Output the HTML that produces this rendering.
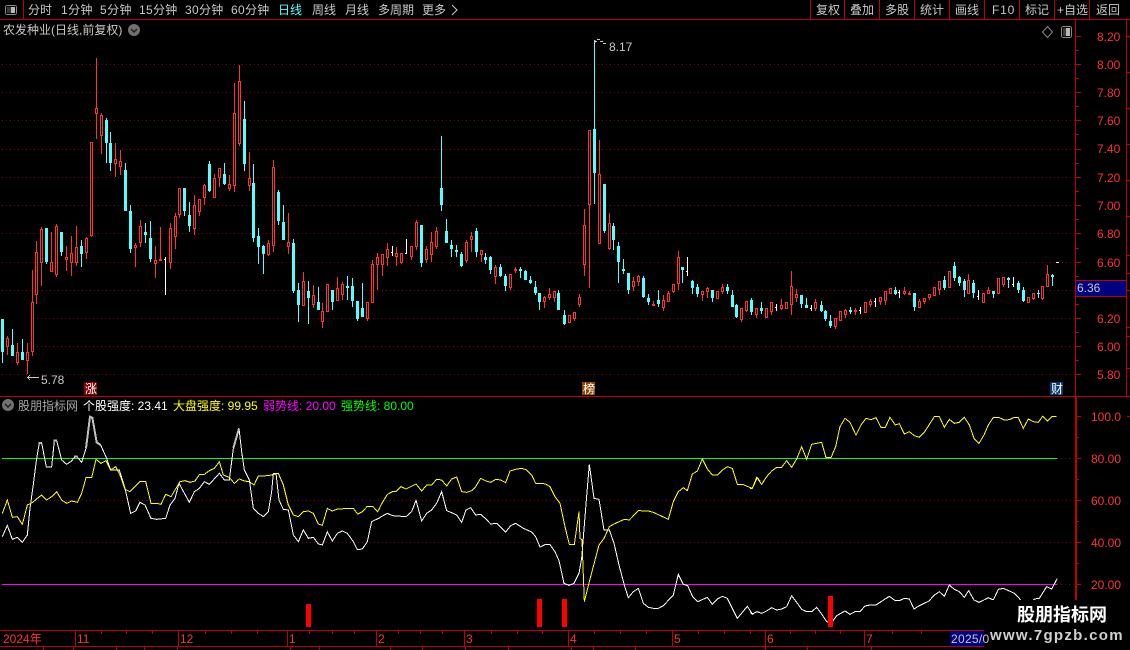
<!DOCTYPE html>
<html><head><meta charset="utf-8"><style>
html,body{margin:0;padding:0;background:#000;width:1130px;height:650px;overflow:hidden}
svg{display:block;position:absolute;left:0;top:0}
text{font-family:"Liberation Sans","WenQuanYi Zen Hei","Noto Sans CJK SC",sans-serif;font-size:12px;white-space:pre}
.t text{fill:#c8c8c8}
.a text{fill:#ff3232}
</style></head><body>
<svg width="1130" height="650" viewBox="0 0 1130 650" xmlns="http://www.w3.org/2000/svg">
<rect width="1130" height="650" fill="#000"/>
<g shape-rendering="crispEdges">
<!-- grid -->
<g stroke="#8a0000" stroke-dasharray="1 3" fill="none">
<path d="M2 64.5H1075M2 92.5H1075M2 120.5H1075M2 149.5H1075M2 177.5H1075M2 205.5H1075M2 233.5H1075M2 262.5H1075M2 290.5H1075M37 318.5H1075M37 346.5H1075M2 374.5H1075M2 500.5H1075M2 542.5H1075M1057 458.5H1075M1057 584.5H1075"/>
</g>
<!-- frame -->
<g fill="#c00000">
<rect x="0" y="19" width="1130" height="1"/>
<rect x="23" y="0" width="1" height="19"/>
<rect x="810" y="0" width="1" height="19"/><rect x="844" y="0" width="1" height="19"/><rect x="879" y="0" width="1" height="19"/><rect x="914" y="0" width="1" height="19"/><rect x="949" y="0" width="1" height="19"/><rect x="984" y="0" width="1" height="19"/><rect x="1019" y="0" width="1" height="19"/><rect x="1054" y="0" width="1" height="19"/><rect x="1089" y="0" width="1" height="19"/>
<rect x="0" y="396" width="1130" height="1"/>
<rect x="1075" y="20" width="1" height="376"/>
<rect x="1075" y="397" width="2" height="233"/>
<rect x="1126" y="20" width="1" height="376"/>
<rect x="0" y="630" width="1130" height="1"/>
<rect x="0" y="646" width="1130" height="1"/>
<rect x="75" y="630" width="1" height="16"/><rect x="178" y="630" width="1" height="16"/><rect x="287" y="630" width="1" height="16"/><rect x="376" y="630" width="1" height="16"/><rect x="464" y="630" width="1" height="16"/><rect x="568" y="630" width="1" height="16"/><rect x="672" y="630" width="1" height="16"/><rect x="765" y="630" width="1" height="16"/><rect x="864" y="630" width="1" height="16"/>
</g>
<path stroke="#c00000" fill="none" d="M1076 36.5H1081M1076 50.5H1079M1076 64.5H1081M1076 78.5H1079M1076 92.5H1081M1076 106.5H1079M1076 120.5H1081M1076 134.5H1079M1076 149.5H1081M1076 163.5H1079M1076 177.5H1081M1076 191.5H1079M1076 205.5H1081M1076 219.5H1079M1076 233.5H1081M1076 248.5H1079M1076 262.5H1081M1076 276.5H1079M1076 304.5H1079M1076 318.5H1081M1076 332.5H1079M1076 346.5H1081M1076 360.5H1079M1076 374.5H1081M1077 416.5H1081M1077 437.5H1079M1077 458.5H1081M1077 479.5H1079M1077 500.5H1081M1077 521.5H1079M1077 542.5H1081M1077 563.5H1079M1077 584.5H1081M1127 36.5H1130M1127 72.5H1130M1127 108.5H1130M1127 144.5H1130M1127 180.5H1130M1127 216.5H1130M1127 255.5H1130M1127 273.5H1130M1127 290.5H1130M1127 327.5H1130M1127 336.5H1130M1127 368.5H1130M1127 416.5H1130M101.5 631V634M126.5 631V634M152.5 631V634M205.5 631V634M231.5 631V634M257.5 631V634M309.5 631V634M332.5 631V634M354.5 631V634M398.5 631V634M420.5 631V634M442.5 631V634M491.5 631V634M517.5 631V634M542.5 631V634M594.5 631V634M620.5 631V634M646.5 631V634M698.5 631V634M724.5 631V634M750.5 631V634M790.5 631V634M815.5 631V634M840.5 631V634M892.5 631V634M921.5 631V634M43.5 647V650M73.5 647V650M116.5 647V650M144.5 647V650M177.5 647V650M290.5 647V650M319.5 647V650M390.5 647V650M422.5 647V650M465.5 647V650M508.5 647V650M571.5 647V650M593.5 647V650M635.5 647V650M765.5 647V650M807.5 647V650M871.5 647V650"/>
<!-- red wicks -->
<path fill="none" stroke="#ff3232" d="M7.5 336V355M17.5 343V365M27.5 343V374M32.5 270V356M36.5 241V304M41.5 227V286M51.5 232V272M56.5 224V277M66.5 246V271M71.5 236V276M76.5 226V266M86.5 237V259M91.5 142V237M96.5 58V139M101.5 113V154M115.5 143V177M120.5 150V175M135.5 243V267M140.5 220V247M155.5 246V278M160.5 227V261M170.5 223V269M175.5 213V249M179.5 188V218M194.5 195V235M199.5 199V216M204.5 184V205M214.5 174V198M219.5 168V187M229.5 175V191M234.5 83V192M239.5 65V146M249.5 152V191M268.5 240V256M273.5 160V252M288.5 213V254M303.5 272V306M313.5 285V308M322.5 303V328M327.5 284V312M337.5 277V301M342.5 282V300M367.5 302V321M372.5 260V303M377.5 253V290M382.5 254V276M387.5 243V266M396.5 247V266M401.5 253V264M411.5 246V260M416.5 220V250M426.5 246V263M431.5 232V262M436.5 227V249M466.5 240V263M471.5 232V252M481.5 250V262M495.5 265V284M510.5 274V290M515.5 267V273M544.5 296V308M549.5 288V300M554.5 291V302M569.5 315V323M574.5 312V321M579.5 294V307M584.5 209V276M589.5 130V288M599.5 140V244M609.5 213V250M633.5 277V291M638.5 275V286M653.5 301V306M663.5 295V311M668.5 291V302M673.5 284V293M678.5 251V290M702.5 291V301M707.5 287V298M717.5 291V299M722.5 284V294M741.5 308V322M746.5 301V312M756.5 308V318M766.5 308V318M771.5 302V315M781.5 299V310M786.5 302V309M791.5 271V315M796.5 289V302M815.5 299V311M835.5 318V329M840.5 311V321M845.5 309V318M855.5 308V315M865.5 302V313M870.5 299V307M880.5 297V305M885.5 291V305M890.5 288V294M904.5 287V295M909.5 291V295M919.5 299V308M924.5 298V304M929.5 294V300M934.5 287V296M939.5 281V295M949.5 271V288M968.5 274V294M983.5 293V303M988.5 287V294M998.5 278V294M1003.5 277V287M1028.5 297V303M1033.5 293V300M1042.5 286V300M1047.5 265V287"/>
<!-- red bodies -->
<path fill="none" stroke="#ff3232" stroke-width="3" d="M7.5 338V347M17.5 352V363M27.5 352V361M32.5 302V352M36.5 252V295M41.5 229V263M51.5 262V272M56.5 226V275M66.5 257V260M71.5 253V263M76.5 247V263M86.5 238V253M91.5 142V236M96.5 108V114M101.5 115V136M115.5 159V164M120.5 161V167M135.5 245V248M140.5 226V243M155.5 260V264M160.5 259V261M170.5 228V263M175.5 216V237M179.5 188V215M194.5 205V229M199.5 199V212M204.5 185V198M214.5 178V198M219.5 168V178M229.5 184V189M234.5 113V186M239.5 81V144M249.5 178V186M268.5 243V255M273.5 167V246M288.5 242V247M303.5 281V306M313.5 295V305M322.5 311V322M327.5 284V312M337.5 288V301M342.5 284V295M367.5 302V319M372.5 264V303M377.5 257V265M382.5 254V265M387.5 249V258M396.5 253V257M401.5 253V263M411.5 246V257M416.5 222V247M426.5 249V260M431.5 242V255M436.5 231V247M466.5 242V261M471.5 236V240M481.5 250V255M495.5 267V277M510.5 274V288M515.5 269V271M544.5 297V302M549.5 294V298M554.5 291V298M569.5 315V323M574.5 312V319M579.5 297V305M584.5 225V265M589.5 130V205M599.5 174V244M609.5 223V249M633.5 281V287M638.5 276V282M653.5 304V306M663.5 300V308M668.5 293V302M673.5 284V292M678.5 257V284M702.5 291V295M707.5 288V292M717.5 291V299M722.5 287V292M741.5 308V320M746.5 301V311M756.5 308V315M766.5 308V318M771.5 302V312M781.5 305V309M786.5 302V309M791.5 286V305M796.5 294V298M815.5 302V309M835.5 318V327M840.5 311V321M845.5 310V315M855.5 310V312M865.5 302V313M870.5 301V305M880.5 297V302M885.5 291V301M890.5 288V294M904.5 291V294M909.5 293V295M919.5 301V308M924.5 298V302M929.5 294V298M934.5 287V296M939.5 281V290M949.5 271V288M968.5 280V294M983.5 293V303M988.5 290V294M998.5 278V294M1003.5 277V285M1028.5 297V303M1033.5 293V299M1042.5 286V299M1047.5 274V287"/>
<!-- hollow centres -->
<path fill="none" stroke="#000" d="M7.5 339V346M17.5 353V362M27.5 353V360M32.5 303V351M36.5 253V294M41.5 230V262M51.5 263V271M56.5 227V274M66.5 258V259M71.5 254V262M76.5 248V262M86.5 239V252M91.5 143V235M96.5 109V113M101.5 116V135M115.5 160V163M120.5 162V166M135.5 246V247M140.5 227V242M155.5 261V263M170.5 229V262M175.5 217V236M179.5 189V214M194.5 206V228M199.5 200V211M204.5 186V197M214.5 179V197M219.5 169V177M229.5 185V188M234.5 114V185M239.5 82V143M249.5 179V185M268.5 244V254M273.5 168V245M288.5 243V246M303.5 282V305M313.5 296V304M322.5 312V321M327.5 285V311M337.5 289V300M342.5 285V294M367.5 303V318M372.5 265V302M377.5 258V264M382.5 255V264M387.5 250V257M396.5 254V256M401.5 254V262M411.5 247V256M416.5 223V246M426.5 250V259M431.5 243V254M436.5 232V246M466.5 243V260M471.5 237V239M481.5 251V254M495.5 268V276M510.5 275V287M544.5 298V301M549.5 295V297M554.5 292V297M569.5 316V322M574.5 313V318M579.5 298V304M584.5 226V264M589.5 131V204M599.5 175V243M609.5 224V248M633.5 282V286M638.5 277V281M663.5 301V307M668.5 294V301M673.5 285V291M678.5 258V283M702.5 292V294M707.5 289V291M717.5 292V298M722.5 288V291M741.5 309V319M746.5 302V310M756.5 309V314M766.5 309V317M771.5 303V311M781.5 306V308M786.5 303V308M791.5 287V304M796.5 295V297M815.5 303V308M835.5 319V326M840.5 312V320M845.5 311V314M865.5 303V312M870.5 302V304M880.5 298V301M885.5 292V300M890.5 289V293M904.5 292V293M919.5 302V307M924.5 299V301M929.5 295V297M934.5 288V295M939.5 282V289M949.5 272V287M968.5 281V293M983.5 294V302M988.5 291V293M998.5 279V293M1003.5 278V284M1028.5 298V302M1033.5 294V298M1042.5 287V298M1047.5 275V286"/>
<!-- cyan wicks -->
<path fill="none" stroke="#55ffff" d="M2.5 319V363M12.5 329V356M22.5 339V360M46.5 228V264M61.5 232V256M81.5 240V267M106.5 118V163M110.5 132V171M125.5 163V211M130.5 205V253M145.5 223V243M150.5 221V262M184.5 188V216M189.5 202V232M209.5 161V192M224.5 163V185M244.5 101V171M253.5 164V242M258.5 228V264M263.5 245V274M278.5 190V225M283.5 205V240M293.5 239V293M298.5 283V322M308.5 281V324M318.5 287V310M332.5 290V310M347.5 276V300M352.5 278V307M357.5 301V321M362.5 283V317M421.5 225V267M441.5 136V211M446.5 219V243M451.5 240V257M456.5 245V257M461.5 252V267M476.5 228V257M485.5 253V264M490.5 256V274M500.5 264V277M505.5 274V291M520.5 267V278M525.5 270V280M530.5 276V284M535.5 281V295M539.5 293V310M558.5 290V310M564.5 310V325M594.5 40V204M604.5 184V233M613.5 223V250M618.5 242V283M623.5 259V274M628.5 273V294M643.5 276V298M648.5 294V305M658.5 290V307M682.5 267V283M692.5 280V294M697.5 284V297M712.5 290V302M727.5 284V294M732.5 290V307M736.5 304V318M751.5 298V315M761.5 302V314M801.5 295V308M806.5 298V308M821.5 301V312M825.5 310V321M830.5 315V328M850.5 307V314M895.5 287V295M914.5 293V311M944.5 276V290M954.5 262V281M959.5 276V286M964.5 279V297M973.5 280V298M993.5 291V298M1008.5 277V288M1018.5 281V293M1023.5 287V302M1038.5 290V298M1052.5 274V286"/>
<!-- cyan bodies -->
<path fill="none" stroke="#55ffff" stroke-width="3" d="M2.5 319V352M12.5 345V356M22.5 352V360M46.5 228V262M61.5 232V252M81.5 246V254M106.5 120V143M110.5 143V163M125.5 170V211M130.5 211V249M145.5 232V235M150.5 238V259M184.5 188V211M189.5 215V226M209.5 164V191M224.5 174V184M244.5 119V164M253.5 183V238M258.5 236V247M263.5 246V254M278.5 192V221M283.5 222V240M293.5 243V291M298.5 290V305M308.5 291V298M318.5 302V310M332.5 290V302M347.5 286V288M352.5 286V301M357.5 301V319M362.5 308V317M421.5 225V263M441.5 188V205M446.5 231V243M451.5 245V249M456.5 250V252M461.5 254V266M476.5 231V252M485.5 257V260M490.5 257V270M500.5 267V276M505.5 276V286M520.5 269V271M525.5 271V280M530.5 280V283M535.5 287V293M539.5 293V302M558.5 293V310M564.5 315V324M594.5 129V173M604.5 184V231M613.5 226V240M618.5 246V262M623.5 269V271M628.5 273V290M643.5 278V297M648.5 298V302M658.5 300V304M682.5 267V270M692.5 281V288M697.5 287V294M712.5 290V298M727.5 287V291M732.5 295V307M736.5 305V317M751.5 300V312M761.5 308V311M801.5 295V304M806.5 305V308M821.5 305V311M825.5 311V319M830.5 321V326M850.5 310V312M895.5 290V294M914.5 293V307M944.5 280V288M954.5 266V278M959.5 277V283M964.5 281V290M973.5 283V293M993.5 291V294M1008.5 278V280M1018.5 283V290M1023.5 290V301M1038.5 293V294M1052.5 275V277"/>
<!-- white dojis -->
<path fill="none" stroke="#fff" d="M165.5 257V295M164 259.5H165M392.5 246V256M391 252.5H392M406.5 239V254M405 253.5H406M687.5 257V276M686 271.5H687M776.5 304V311M775 307.5H776M811.5 305V311M810 308.5H811M860.5 307V314M859 310.5H860M875.5 298V307M874 301.5H875M899.5 290V298M898 292.5H899M978.5 290V300M977 296.5H978M1013.5 277V287M1012 284.5H1013M1056 262.5H1059"/>
<!-- high/low arrows -->
<path fill="none" stroke="#c8c8c8" d="M27 377.5H39M28 376.5H29M28 378.5H29M29 375.5H30M29 379.5H30M595 41.5H597M595 40V43M597 39.5H600M600 41.5H603M603 43.5H606"/>
<!-- indicator lines -->
<path stroke="#00ff00" d="M2 458.5H1057" fill="none"/>
<path stroke="#ff00ff" d="M2 584.5H1057" fill="none"/>
<g transform="translate(0 395) scale(.33333)" fill="none" stroke-width="3">
<polyline stroke="#fff" points="7,425 22,391 37,433 52,427 67,442 82,420 90,340 100,268 110,190 118,144 125,144 139,216 155,216 163,137 170,137 185,195 200,208 215,198 225,185 232,186 245,202 258,160 270,65 277,68 290,142 302,150 320,190 332,225 358,225 375,280 392,355 407,348 420,322 435,330 453,370 470,373 497,370 510,330 525,310 537,265 568,322 583,290 598,280 613,260 628,268 658,235 673,255 688,255 700,160 717,100 725,170 733,225 748,255 760,340 775,355 790,365 805,350 815,290 820,235 828,235 837,315 850,343 865,345 880,420 895,440 910,405 925,430 940,427 955,447 967,450 982,410 997,438 1012,415 1027,408 1042,415 1060,440 1072,464 1087,462 1102,440 1115,380 1140,368"/>
<path stroke="#c0c0c0" stroke-width="6" d="M258 160L270 65 277 68 290 142 302 150M116 144H126M161 137H171M222 185H232M700 160L717 100"/>
<polyline stroke="#ffff00" points="7,355 22,315 37,367 52,365 67,388 82,330 97,323 112,310 125,300 140,315 155,305 170,290 185,315 200,325 215,318 232,322 245,295 258,248 275,248 288,193 303,205 318,197 332,225 347,215 360,240 375,283 390,290 405,275 420,260 437,259 453,325 470,325 483,328 497,298 513,305 540,260 555,257 570,262 585,258 598,239 613,238 628,227 643,220 658,200 670,240 688,247 703,265 718,252 733,258 748,260 762,270 775,243 805,242 835,235 850,270 865,330 880,360 895,365 910,350 925,348 940,355 955,387 967,391 982,340 997,348 1012,342 1060,340 1073,357 1087,350 1102,334 1118,334 1133,350 1140,337"/>
</g>
<g transform="translate(380 395) scale(.33333)" fill="none" stroke-width="3">
<polyline stroke="#fff" points="0,367 22,355 37,362 78,365 95,350 108,316 125,378 140,355 155,345 170,325 185,290 200,347 215,353 230,360 245,382 258,345 272,338 287,360 302,358 318,372 332,387 350,385 377,411 392,392 407,385 430,400 455,411 467,425 480,456 495,449 510,449 525,470 537,497 552,565 567,571 582,565 597,535 605,490 617,340 628,208 642,310 657,313 672,405 688,405 702,445 717,510 733,570 745,608 760,590 775,580 790,625 805,637 820,640 835,640 850,632 880,600 895,538 910,568 923,572 938,605 953,620 982,607 997,628 1012,612 1027,604 1042,610 1072,670 1102,634 1117,657 1132,650 1140,652"/>
<polyline stroke="#ffff00" points="0,335 22,298 37,290 48,290 63,275 78,282 108,267 125,288 140,270 155,270 170,253 185,255 200,273 215,252 230,246 245,290 260,292 275,287 287,275 302,250 318,258 332,262 347,253 362,255 377,263 390,228 407,223 425,220 440,225 455,240 467,265 482,265 497,267 510,275 525,305 540,325 555,395 568,448 583,448 597,350 600,430 606,435 613,620 628,560 657,450 672,430 688,395 702,387 733,373 748,375 775,347 805,348 820,352 865,373 880,320 895,290 910,278 922,287 937,237 952,228 967,192 982,222 997,240 1012,240 1027,225 1042,215 1057,220 1072,268 1087,268 1117,280 1132,248 1140,258"/>
</g>
<g transform="translate(750 395) scale(.33333)" fill="none" stroke-width="3">
<polyline stroke="#ffff00" points="0,280 7,280 20,247 35,268 50,245 65,228 80,217 95,217 110,197 125,217 140,192 155,155 170,193 185,148 200,145 215,142 228,188 243,188 257,155 270,95 285,70 300,82 318,120 333,90 348,70 363,74 378,68 393,97 406,97 420,67 436,90 448,86 463,117 478,110 493,122 508,127 523,112 553,65 568,65 583,97 598,73 613,85 628,82 643,67 658,90 672,130 687,145 702,120 715,90 730,67 748,68 763,75 778,74 793,67 805,68 820,100 835,72 850,80 865,82 878,64 893,78 907,64 920,64"/>
<polyline stroke="#fff" points="0,650 7,658 20,650 35,655 50,648 65,638 80,645 95,642 110,635 125,602 140,622 155,643 170,650 185,650 200,637 215,657 230,680 245,683 260,662 285,648 300,658 315,650 330,650 345,633 360,630 378,630 393,620 418,604 436,617 450,616 463,610 478,612 492,642 508,632 537,618 553,600 568,590 583,604 598,570 613,583 628,590 643,607 656,587 672,615 687,622 702,615 715,608 730,615 745,583 760,580 778,588 793,595 808,610 820,630 840,630 853,612 868,610 890,575 905,582 922,550"/>
</g>
<!-- red signal bars -->
<g fill="#ff0000">
<rect x="306" y="604" width="5" height="23"/>
<rect x="537" y="599" width="5" height="28"/>
<rect x="562" y="599" width="5" height="28"/>
<rect x="828" y="596" width="5" height="31"/>
</g>
<!-- axis highlight -->
<rect x="1076" y="281" width="50" height="15" fill="#000080"/>
<path d="M1076 280.5H1127M1076 296.5H1127" stroke="#c00000" fill="none"/>
<!-- badges -->
<rect x="84" y="382" width="13" height="13" fill="#8b0000"/>
<rect x="582" y="382" width="13" height="13" fill="#8f4a00"/>
<rect x="1050" y="382" width="13" height="13" fill="#0a3a70"/>
<!-- date highlight -->
<rect x="950" y="631" width="34" height="15" fill="#000080"/>
<!-- watermark box -->
<rect x="984" y="600" width="146" height="50" fill="#000"/>
<!-- buttons -->
<rect x="5.5" y="5.5" width="11" height="9" rx="2" fill="none" stroke="#8a8a8a"/>
<rect x="7" y="7" width="4" height="6" fill="#3a3a3a"/>
<rect x="11" y="7" width="4" height="6" fill="#b8b8b8"/>
<rect x="1061.5" y="26.5" width="10" height="11" rx="2" fill="none" stroke="#8a8a8a"/>
<rect x="1063" y="28" width="3" height="8" fill="#3a3a3a"/>
<rect x="1066" y="28" width="4" height="8" fill="#b8b8b8"/>
</g>
<path d="M1047.5 26.5L1052.5 32 1047.5 37.5 1042.5 32Z" fill="none" stroke="#8a8a8a"/>
<circle cx="134" cy="30" r="6" fill="#707070"/>
<path d="M131 29l3 3 3-3" fill="none" stroke="#1c1c1c" stroke-width="1.4"/>
<circle cx="8" cy="405" r="6" fill="#707070"/>
<path d="M5 404l3 3 3-3" fill="none" stroke="#1c1c1c" stroke-width="1.4"/>
<path d="M452 5l5 5-5 5" fill="none" stroke="#c8c8c8"/>
<!-- toolbar text -->
<g class="t">
<text x="28" y="14">分时</text>
<text x="61" y="14" letter-spacing=".4">1分钟</text>
<text x="100" y="14" letter-spacing=".4">5分钟</text>
<text x="139" y="14" letter-spacing=".3">15分钟</text>
<text x="185" y="14" letter-spacing=".3">30分钟</text>
<text x="231" y="14" letter-spacing=".3">60分钟</text>
<text x="278" y="14" style="fill:#55ffff">日线</text>
<text x="312" y="14">周线</text>
<text x="345" y="14">月线</text>
<text x="378" y="14">多周期</text>
<text x="422" y="14">更多</text>
<text x="816" y="14">复权</text>
<text x="850" y="14">叠加</text>
<text x="885" y="14">多股</text>
<text x="920" y="14">统计</text>
<text x="955" y="14">画线</text>
<text x="992" y="14" letter-spacing=".8">F10</text>
<text x="1025" y="14">标记</text>
<text x="1057" y="14">+自选</text>
<text x="1096" y="14">返回</text>
<text x="3" y="34">农发种业(日线,前复权)</text>
<text x="41" y="384">5.78</text>
<text x="609" y="51">8.17</text>
<text x="18" y="410" style="fill:#a8a8a8">股朋指标网</text>
<text x="83" y="410" style="fill:#fff">个股强度: 23.41</text>
<text x="173" y="410" style="fill:#ffff00">大盘强度: 99.95</text>
<text x="263" y="410" style="fill:#ff00ff">弱势线: 20.00</text>
<text x="341" y="410" style="fill:#00ff00">强势线: 80.00</text>
</g>
<text x="85" y="393" style="fill:#fff">涨</text>
<text x="583" y="393" style="fill:#fff">榜</text>
<text x="1051" y="393" style="fill:#fff">财</text>
<text x="1077" y="292" style="fill:#c8c8c8">6.36</text>
<!-- axis labels -->
<g class="a">
<text x="1097" y="41">8.20</text><text x="1097" y="69">8.00</text><text x="1097" y="97">7.80</text><text x="1097" y="125">7.60</text><text x="1097" y="153">7.40</text><text x="1097" y="182">7.20</text><text x="1097" y="210">7.00</text><text x="1097" y="238">6.80</text><text x="1097" y="267">6.60</text><text x="1097" y="323">6.20</text><text x="1097" y="351">6.00</text><text x="1097" y="379">5.80</text>
<text x="1091" y="421">100.0</text><text x="1091" y="463">80.00</text><text x="1091" y="505">60.00</text><text x="1091" y="547">40.00</text><text x="1091" y="589">20.00</text>
<text x="3" y="643">2024年</text><text x="77" y="643">11</text><text x="180" y="643">12</text><text x="289" y="643">1</text><text x="378" y="643">2</text><text x="466" y="643">3</text><text x="570" y="643">4</text><text x="674" y="643">5</text><text x="767" y="643">6</text><text x="866" y="643">7</text>
</g>
<text x="951" y="643" style="fill:#c8c8c8" letter-spacing=".3">2025/0</text>
<!-- watermark -->
<text x="1017" y="621" style="fill:#fff;font-size:18px;font-weight:bold;font-family:'Liberation Sans','Noto Sans CJK SC',sans-serif">股朋指标网</text>
<text x="990" y="640" style="fill:#d0d0d0;font-size:15px;font-weight:bold;letter-spacing:1.3px">www.7gpzb.com</text>
</svg>
</body></html>
